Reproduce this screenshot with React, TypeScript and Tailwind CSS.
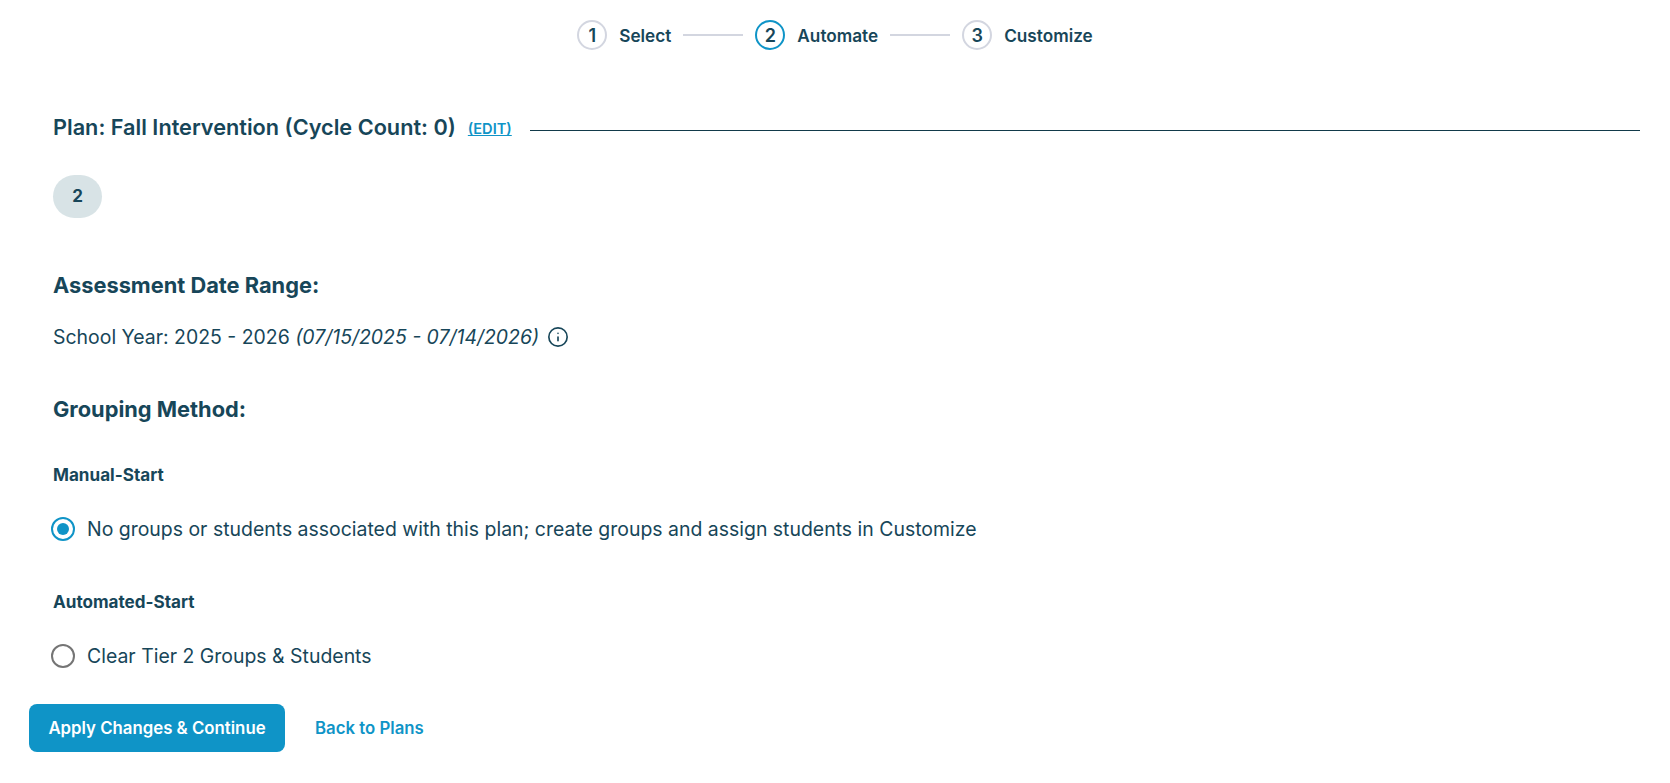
import React from "react";
import { Info } from "lucide-react";

function Step({ n, label, active }: { n: number; label: string; active?: boolean }) {
  return (
    <div className="flex items-center">
      <div className={`w-[30px] h-[30px] rounded-full border-2 flex items-center justify-center text-[18px] font-semibold text-[#174659] ${active ? "border-[#0f94c7]" : "border-[#d3d6e0]"}`}>{n}</div>
      <span className="ml-[12px] mt-[1px] text-[17.2px] font-semibold text-[#174659]">{label}</span>
    </div>
  );
}

function Line() {
  return <div className="w-[60px] h-[2px] bg-[#d3d6e0] mx-3" />;
}

function Radio({ label, checked }: { label: string; checked?: boolean }) {
  return (
    <label className="flex items-center -ml-[2px] h-[28px] text-[19.45px] leading-[28px]">
      <span className={`w-[24px] h-[24px] rounded-full border-2 flex items-center justify-center bg-white ${checked ? "border-[#0f94c7]" : "border-[#757575]"}`}>
        {checked && <span className="w-[12px] h-[12px] rounded-full bg-[#0f94c7]" />}
      </span>
      <span className="ml-[12px]">{label}</span>
    </label>
  );
}

export default function App() {
  return (
    <div className="w-[1670px] h-[783px] bg-white text-[#174659] overflow-hidden" style={{ fontFamily: "Inter, sans-serif" }}>
      <div className="flex justify-center items-center pt-[20px]">
        <Step n={1} label="Select" />
        <Line />
        <Step n={2} label="Automate" active />
        <Line />
        <Step n={3} label="Customize" />
      </div>
      <div className="pl-[53px] pr-[30px]">
        <div className="flex items-center mt-[61px] h-[32px]">
          <span className="text-[21.7px] leading-[32px] font-semibold">Plan: Fall Intervention (Cycle Count: 0)</span>
          <a className="ml-[12px] mt-[6px] text-[14.6px] font-semibold text-[#0f94c7] underline">(EDIT)</a>
          <div className="flex-1 h-px bg-[#123a4a] ml-[18px] mt-[7px]" />
        </div>
        <div className="mt-[32px] w-[49px] h-[43px] rounded-full bg-[#d8e3e6] flex items-center justify-center text-[17px] font-bold">2</div>
        <div className="mt-[52px] text-[21.8px] leading-[30px] font-bold">Assessment Date Range:</div>
        <div className="mt-[23px] flex items-center text-[19.45px] leading-[28px]">
          <span>School Year: 2025 - 2026 <em>(07/15/2025 - 07/14/2026)</em></span>
          <Info className="ml-[8px] w-[22px] h-[22px]" strokeWidth={1.8} />
        </div>
        <div className="mt-[43px] text-[21.8px] leading-[30px] font-bold">Grouping Method:</div>
        <div className="mt-[39px] text-[17.1px] leading-[24px] font-bold">Manual-Start</div>
        <div className="mt-[28px]">
          <Radio checked label="No groups or students associated with this plan; create groups and assign students in Customize" />
        </div>
        <div className="mt-[47px] text-[17.1px] leading-[24px] font-bold">Automated-Start</div>
        <div className="mt-[28px]">
          <Radio label="Clear Tier 2 Groups & Students" />
        </div>
      </div>
      <div className="flex items-center pl-[29px] mt-[34px]">
        <button className="h-[48px] w-[256px] rounded-[8px] bg-[#0f94c7] text-white text-[16.8px] font-semibold pt-[1px]">Apply Changes &amp; Continue</button>
        <a className="ml-[30px] mt-[1px] text-[16.8px] font-semibold text-[#0f94c7]">Back to Plans</a>
      </div>
    </div>
  );
}
